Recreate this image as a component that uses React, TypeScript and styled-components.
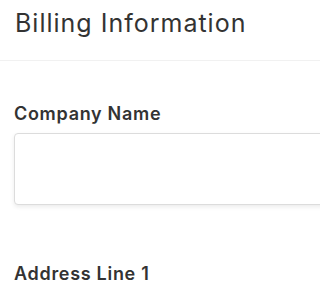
import React from 'react';
import styled, {createGlobalStyle} from 'styled-components';

const GlobalStyle = createGlobalStyle`
  body {
    margin: 0;
    background: #ffffff;
    font-family: Inter, "Liberation Sans", sans-serif;
    color: #333333;
  }
`

const App = () => {
    return (
        <>
            <GlobalStyle/>
            <Page>
                <Header>
                    <Title>Billing Information</Title>
                </Header>
                <Form>
                    <Field>
                        <Label htmlFor="company">Company Name</Label>
                        <Input id="company" type="text"/>
                    </Field>
                    <Field>
                        <Label htmlFor="address1">Address Line 1</Label>
                    </Field>
                </Form>
            </Page>
        </>
    );
};

export default App;

const Page = styled.div`
  width: 100%;
  overflow: hidden;
  background-color: #fff;
`

const Header = styled.div`
  padding: 8px 14px 0 15px;
  height: 52px;
  border-bottom: 1px solid #f1f1f1;
`

const Title = styled.h1`
  margin: 0;
  font-size: 25px;
  font-weight: 400;
  line-height: 30px;
  letter-spacing: 1px;
  color: #333;
`

const Form = styled.div`
  padding: 41px 0 0 14px;
  display: flex;
  flex-direction: column;
  gap: 57px;
`

const Field = styled.div`
  display: flex;
  flex-direction: column;
`

const Label = styled.label`
  font-size: 18px;
  font-weight: 600;
  line-height: 24px;
  letter-spacing: 0.7px;
  color: #333;
  margin-bottom: 7px;
`

const Input = styled.input`
  height: 72px;
  margin-right: -20px;
  box-sizing: border-box;
  border: 1px solid #dcdcdc;
  border-radius: 4px;
  box-shadow: 0 2px 4px rgba(0, 0, 0, 0.08);
  background: #fff;
  outline: none;
`
